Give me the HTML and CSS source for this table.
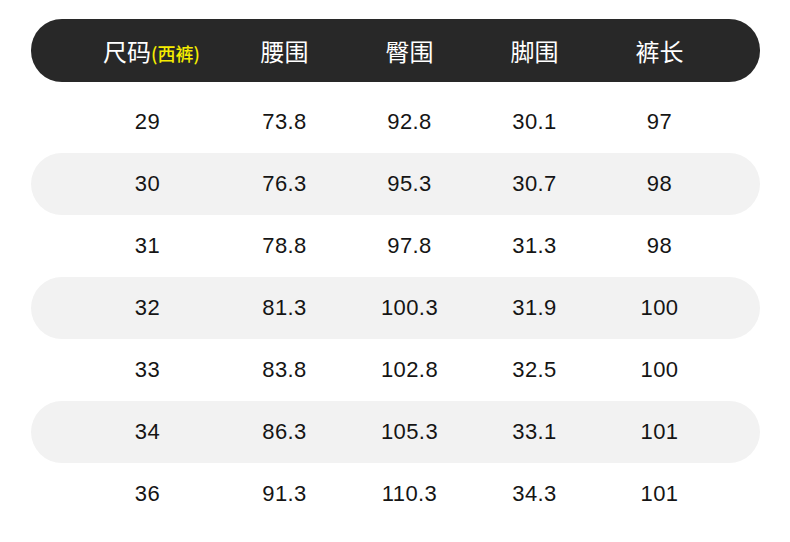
FILE: index.html
```html
<!DOCTYPE html>
<html lang="zh">
<head>
<meta charset="utf-8">
<link rel="stylesheet" href="styles.css">
</head>
<body>
<div class="table">
  <div class="row head">
    <div class="cell size-label"><span class="zh">尺码</span><span class="sub">(西裤)</span></div>
    <div class="cell"><span class="zh">腰围</span></div>
    <div class="cell"><span class="zh">臀围</span></div>
    <div class="cell"><span class="zh">脚围</span></div>
    <div class="cell"><span class="zh">裤长</span></div>
  </div>
  <div class="body">
    <div class="row"><div class="cell">29</div><div class="cell">73.8</div><div class="cell">92.8</div><div class="cell">30.1</div><div class="cell">97</div></div>
    <div class="row alt"><div class="cell">30</div><div class="cell">76.3</div><div class="cell">95.3</div><div class="cell">30.7</div><div class="cell">98</div></div>
    <div class="row"><div class="cell">31</div><div class="cell">78.8</div><div class="cell">97.8</div><div class="cell">31.3</div><div class="cell">98</div></div>
    <div class="row alt"><div class="cell">32</div><div class="cell">81.3</div><div class="cell">100.3</div><div class="cell">31.9</div><div class="cell">100</div></div>
    <div class="row"><div class="cell">33</div><div class="cell">83.8</div><div class="cell">102.8</div><div class="cell">32.5</div><div class="cell">100</div></div>
    <div class="row alt"><div class="cell">34</div><div class="cell">86.3</div><div class="cell">105.3</div><div class="cell">33.1</div><div class="cell">101</div></div>
    <div class="row"><div class="cell">36</div><div class="cell">91.3</div><div class="cell">110.3</div><div class="cell">34.3</div><div class="cell">101</div></div>
  </div>
</div>
</body>
</html>
```
FILE: styles.css
```css
html, body {
  margin: 0;
  padding: 0;
  background: #ffffff;
}
.table {
  width: 729px;
  padding: 19px 0 0 31px;
  font-family: "Liberation Sans", Arial, "Noto Sans CJK SC", sans-serif;
}
.row {
  display: grid;
  grid-template-columns: 149px 125px 125px 125px 125px;
  padding-left: 42px;
  height: 62px;
  align-items: center;
  border-radius: 31px;
}
.head {
  background: #282828;
  height: 63px;
  color: #ffffff;
  margin-bottom: 9px;
}
.body .row {
  color: #151515;
  font-size: 22px;
  letter-spacing: 0.4px;
}
.alt {
  background: #f2f2f2;
}
.cell {
  text-align: center;
  white-space: nowrap;
}
.size-label {
  padding-left: 8px;
}
.zh {
  font-family: "Noto Sans CJK SC", sans-serif;
  font-size: 24px;
  font-weight: 400;
}
.sub {
  font-family: "Noto Sans CJK SC", sans-serif;
  font-size: 18px;
  font-weight: 500;
  color: #f5ec00;
}
```
